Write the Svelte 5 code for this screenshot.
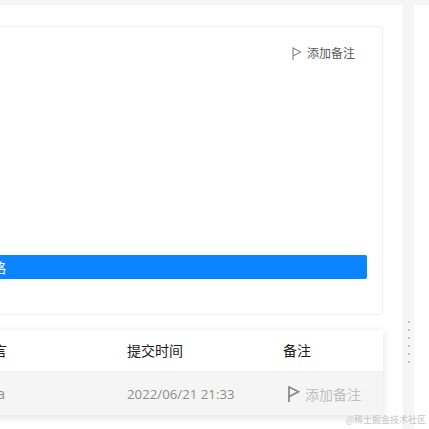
<script>
  const note = '添加备注';
</script>

<div class="page">
  <section class="panel">
    <div class="card">
      <div class="card-top">
        <button class="note-btn">
          <svg width="10" height="13" viewBox="0 0 10 13"><path d="M1 13V1l7.5 4L1 9" fill="none" stroke="#8c8c8c" stroke-width="1.2"/></svg>
          {note}
        </button>
      </div>
      <button class="primary">查看策略</button>
    </div>

    <div class="table">
      <div class="row head">
        <span class="c-msg">留言</span>
        <span class="c-time">提交时间</span>
        <span class="c-note">备注</span>
      </div>
      <div class="row body">
        <span class="c-msg">aaaa</span>
        <span class="c-time">2022/06/21 21:33</span>
        <span class="c-note add">
          <svg width="12" height="16" viewBox="0 0 12 16"><path d="M1 16V1l9.5 4.8L1 10.6" fill="none" stroke="#8c8c8c" stroke-width="1.8"/></svg>
          {note}
        </span>
      </div>
    </div>
  </section>

  <div class="splitter">
    {#each Array(6) as _}
      <i></i>
    {/each}
  </div>

  <section class="side"></section>

  <span class="mark">@稀土掘金技术社区</span>
</div>

<style>
  :global(body) {
    margin: 0;
    background: #f5f5f5;
  }

  .page {
    position: relative;
    display: flex;
    width: 429px;
    height: 429px;
    overflow: hidden;
    padding-top: 5px;
    box-sizing: border-box;
    font-family: "Open Sans", "Noto Sans CJK SC", sans-serif;
    font-size: 12px;
    color: #262626;
  }

  .panel {
    flex: none;
    width: 814px;
    margin-left: -411px;
    padding: 21px 20px 0 0;
    box-sizing: border-box;
    background: #fff;
  }

  .card {
    display: flex;
    flex-direction: column;
    height: 289px;
    padding: 16px 15px 35px;
    box-sizing: border-box;
    background: #fff;
    border: 1px solid #f0f0f0;
    border-radius: 4px;
  }

  .card-top {
    flex: 1;
    display: flex;
    justify-content: flex-end;
    padding-right: 12px;
  }

  .note-btn {
    display: flex;
    align-items: center;
    gap: 5px;
    height: 20px;
    padding: 0;
    border: none;
    background: none;
    font: inherit;
    color: #595959;
  }

  .primary {
    height: 24px;
    padding: 0 16px 0 0;
    border: none;
    border-radius: 2px;
    background: #0a84ff;
    color: #fff;
    font: inherit;
    font-size: 14px;
  }

  .table {
    margin-top: 15px;
    background: #fff;
    font-size: 14px;
    box-shadow: 0 2px 8px rgba(0, 0, 0, 0.12);
  }

  .row {
    display: grid;
    grid-template-columns: 538px 156px 1fr;
    align-items: center;
  }

  .head {
    height: 42px;
    padding-bottom: 2px;
    color: #1a1a1a;
    border-bottom: 1px solid #f0f0f0;
    box-sizing: border-box;
  }

  .body {
    height: 43px;
    background: #f5f5f5;
    color: #8c8c8c;
  }

  .body .c-time {
    font-size: 13.25px;
  }

  .c-msg {
    text-align: right;
    padding-right: 120px;
  }

  .body .c-msg {
    padding-right: 122px;
  }

  .c-note {
    display: flex;
    align-items: center;
    gap: 5px;
  }

  .add {
    color: #bfbfbf;
    padding-left: 5px;
  }

  .splitter {
    flex: none;
    width: 11px;
    display: flex;
    flex-direction: column;
    align-items: center;
    justify-content: flex-start;
    gap: 6px;
    padding-top: 316px;
    box-sizing: border-box;
  }

  .splitter i {
    width: 2px;
    height: 2px;
    background: #c8c8c8;
  }

  .side {
    flex: 1;
    background: #fff;
  }

  .mark {
    position: absolute;
    right: 3px;
    bottom: 3px;
    font-family: "Noto Sans CJK SC", sans-serif;
    font-size: 9px;
    color: #c4c4c4;
  }
</style>
